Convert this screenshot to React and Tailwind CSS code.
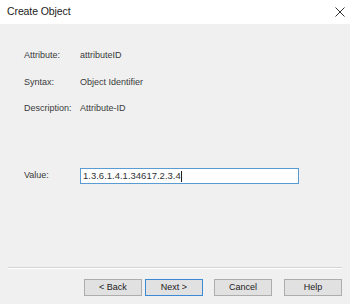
import React from "react";

const font = { fontFamily: '"Liberation Sans", Arial, sans-serif' };

function Row({ label, value, className }) {
  return (
    <div className={"flex items-center h-[12px] " + className}>
      <div className="w-[56px] shrink-0">{label}</div>
      <div>{value}</div>
    </div>
  );
}

function Btn({ children, focused }) {
  return (
    <div
      className={
        "w-[58px] h-[17px] flex items-center justify-center text-[9px] text-[#222] bg-[#e1e1e1] border " +
        (focused ? "border-[#3c8ad6]" : "border-[#adadad]")
      }
    >
      {children}
    </div>
  );
}

export default function App() {
  return (
    <div
      className="w-[350px] h-[304px] bg-[#f0f0f0] flex flex-col overflow-hidden"
      style={font}
    >
      <div className="h-[24px] bg-white flex items-center justify-between pl-[7px] shrink-0">
        <span className="text-[10.5px] text-[#222] tracking-[-0.1px]">Create Object</span>
        <svg width="20" height="20" viewBox="0 0 20 20">
          <path d="M5.5 5.5 L14.5 14.5 M14.5 5.5 L5.5 14.5" stroke="#333" strokeWidth="1" fill="none" />
        </svg>
      </div>
      <div className="flex flex-col pl-[24px] text-[9px] text-[#3a3a3a]">
        <Row className="mt-[26px]" label="Attribute:" value="attributeID" />
        <Row className="mt-[15px]" label="Syntax:" value="Object Identifier" />
        <Row className="mt-[14px]" label="Description:" value="Attribute-ID" />
        <div className="flex items-center mt-[53px] h-[16px]">
          <div className="w-[56px] shrink-0">Value:</div>
          <div className="w-[219px] h-[16px] bg-white border border-[#5a9bd4] flex items-center pl-[2px] text-[9.5px] text-[#333]">
            1.3.6.1.4.1.34617.2.3.4
            <span className="inline-block w-px h-[11px] bg-[#222]" />
          </div>
        </div>
      </div>
      <div className="mt-[83px] mx-[8px] h-[2px] border-t border-[#d4d4d4] border-b border-b-white" />
      <div className="flex mt-[10px] pl-[84px]">
        <Btn>&lt; Back</Btn>
        <div className="ml-[3px]">
          <Btn focused>Next &gt;</Btn>
        </div>
        <div className="ml-[11px]">
          <Btn>Cancel</Btn>
        </div>
        <div className="ml-[12px]">
          <Btn>Help</Btn>
        </div>
      </div>
    </div>
  );
}
